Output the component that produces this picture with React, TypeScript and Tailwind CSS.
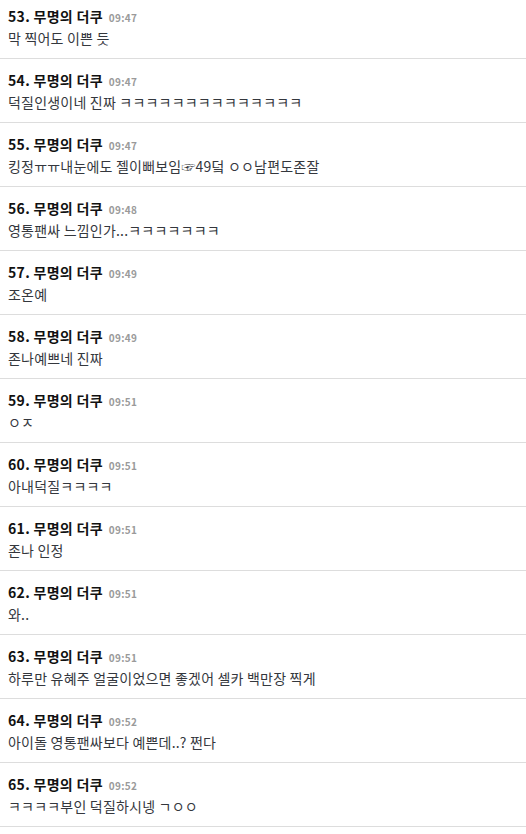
type Comment = {
    no: number;
    name: string;
    time: string;
    body: string;
};

const comments: Comment[] = [
    { no: 53, name: "무명의 더쿠", time: "09:47", body: "막 찍어도 이쁜 듯" },
    { no: 54, name: "무명의 더쿠", time: "09:47", body: "덕질인생이네 진짜 ㅋㅋㅋㅋㅋㅋㅋㅋㅋㅋㅋㅋㅋㅋ" },
    { no: 55, name: "무명의 더쿠", time: "09:47", body: "킹정ㅠㅠ내눈에도 젤이뻐보임☞49덬 ㅇㅇ남편도존잘" },
    { no: 56, name: "무명의 더쿠", time: "09:48", body: "영통팬싸 느낌인가...ㅋㅋㅋㅋㅋㅋㅋ" },
    { no: 57, name: "무명의 더쿠", time: "09:49", body: "조온예" },
    { no: 58, name: "무명의 더쿠", time: "09:49", body: "존나예쁘네 진짜" },
    { no: 59, name: "무명의 더쿠", time: "09:51", body: "ㅇㅈ" },
    { no: 60, name: "무명의 더쿠", time: "09:51", body: "아내덕질ㅋㅋㅋㅋ" },
    { no: 61, name: "무명의 더쿠", time: "09:51", body: "존나 인정" },
    { no: 62, name: "무명의 더쿠", time: "09:51", body: "와.." },
    { no: 63, name: "무명의 더쿠", time: "09:51", body: "하루만 유혜주 얼굴이었으면 좋겠어 셀카 백만장 찍게" },
    { no: 64, name: "무명의 더쿠", time: "09:52", body: "아이돌 영통팬싸보다 예쁜데..? 쩐다" },
    { no: 65, name: "무명의 더쿠", time: "09:52", body: "ㅋㅋㅋㅋ부인 덕질하시넹 ㄱㅇㅇ" },
];

function CommentRow({ c }: { c: Comment }) {
    return (
        <div className="h-[64px] border-b border-[#dddddd] px-[8px] pt-[11px]">
            <div className="flex items-baseline gap-[6px] h-[20px] leading-[20px]">
                <span className="text-[14px] font-bold text-[#111] tracking-[0.3px]">
                    {c.no}. {c.name}
                </span>
                <span className="text-[10px] font-bold text-[#9a9a9a] tracking-[0.3px]">{c.time}</span>
            </div>
            <div className="mt-[2px] h-[20px] leading-[20px] text-[14px] text-[#34373d] tracking-[0.2px]">
                {c.body}
            </div>
        </div>
    );
}

export default function App() {
    return (
        <div
            className="w-[526px] h-[834px] overflow-hidden bg-white"
            style={{ fontFamily: '"Noto Sans CJK KR", "Noto Sans", sans-serif' }}
        >
            <div className="-mt-[5px]">
                {comments.map((c) => (
                    <CommentRow key={c.no} c={c} />
                ))}
            </div>
        </div>
    );
}
